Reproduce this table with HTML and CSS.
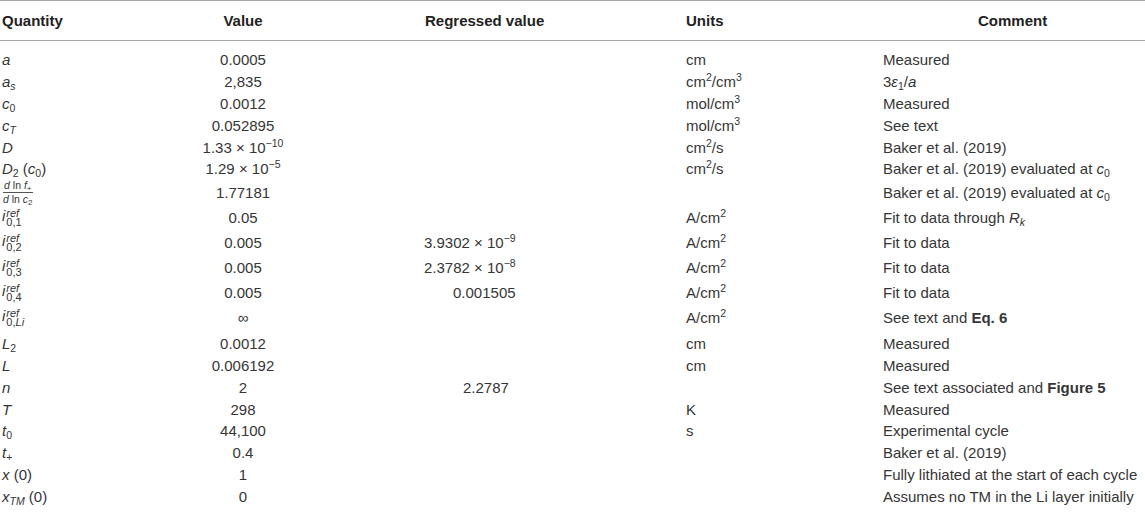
FILE: index.html
```html
<!DOCTYPE html>
<html>
<head>
<meta charset="utf-8">
<link rel="stylesheet" href="styles.css">
</head>
<body>
<table class="tbl">
  <colgroup>
    <col class="c1"><col class="c2"><col class="c3"><col class="c4"><col class="c5">
  </colgroup>
  <thead>
    <tr>
      <th class="h-q">Quantity</th>
      <th class="h-v">Value</th>
      <th class="h-r">Regressed value</th>
      <th class="h-u">Units</th>
      <th class="h-c">Comment</th>
    </tr>
  </thead>
  <tbody>
    <tr class="first">
      <td class="q"><i>a</i></td><td class="v">0.0005</td><td></td><td class="u">cm</td><td class="c">Measured</td>
    </tr>
    <tr>
      <td class="q"><i>a</i><sub><i>s</i></sub></td><td class="v">2,835</td><td></td><td class="u">cm<sup>2</sup>/cm<sup>3</sup></td><td class="c">3<i>ε</i><sub>1</sub>/<i>a</i></td>
    </tr>
    <tr>
      <td class="q"><i>c</i><sub>0</sub></td><td class="v">0.0012</td><td></td><td class="u">mol/cm<sup>3</sup></td><td class="c">Measured</td>
    </tr>
    <tr>
      <td class="q"><i>c</i><sub><i>T</i></sub></td><td class="v">0.052895</td><td></td><td class="u">mol/cm<sup>3</sup></td><td class="c">See text</td>
    </tr>
    <tr>
      <td class="q"><i>D</i></td><td class="v">1.33 × 10<sup>−10</sup></td><td></td><td class="u">cm<sup>2</sup>/s</td><td class="c">Baker et al. (2019)</td>
    </tr>
    <tr>
      <td class="q"><i>D</i><sub>2</sub> (<i>c</i><sub>0</sub>)</td><td class="v">1.29 × 10<sup>−5</sup></td><td></td><td class="u">cm<sup>2</sup>/s</td><td class="c">Baker et al. (2019) evaluated at <i>c</i><sub>0</sub></td>
    </tr>
    <tr class="frac-row">
      <td class="q"><span class="frac"><span class="num"><i>d</i> ln <i>f</i><sub>+</sub></span><span class="den"><i>d</i> ln <i>c</i><sub>2</sub></span></span></td><td class="v">1.77181</td><td></td><td class="u"></td><td class="c">Baker et al. (2019) evaluated at <i>c</i><sub>0</sub></td>
    </tr>
    <tr class="tall">
      <td class="q"><i class="ivar">i</i><span class="ss"><span class="sup"><i>ref</i></span><span class="sb">0,1</span></span></td><td class="v">0.05</td><td></td><td class="u">A/cm<sup>2</sup></td><td class="c">Fit to data through <i>R</i><sub><i>k</i></sub></td>
    </tr>
    <tr class="tall">
      <td class="q"><i class="ivar">i</i><span class="ss"><span class="sup"><i>ref</i></span><span class="sb">0,2</span></span></td><td class="v">0.005</td><td class="r rv1">3.9302 × 10<sup>−9</sup></td><td class="u">A/cm<sup>2</sup></td><td class="c">Fit to data</td>
    </tr>
    <tr class="tall">
      <td class="q"><i class="ivar">i</i><span class="ss"><span class="sup"><i>ref</i></span><span class="sb">0,3</span></span></td><td class="v">0.005</td><td class="r rv1">2.3782 × 10<sup>−8</sup></td><td class="u">A/cm<sup>2</sup></td><td class="c">Fit to data</td>
    </tr>
    <tr class="tall">
      <td class="q"><i class="ivar">i</i><span class="ss"><span class="sup"><i>ref</i></span><span class="sb">0,4</span></span></td><td class="v">0.005</td><td class="r rv2">0.001505</td><td class="u">A/cm<sup>2</sup></td><td class="c">Fit to data</td>
    </tr>
    <tr class="tall">
      <td class="q"><i class="ivar">i</i><span class="ss"><span class="sup"><i>ref</i></span><span class="sb">0,<i>Li</i></span></span></td><td class="v">∞</td><td></td><td class="u">A/cm<sup>2</sup></td><td class="c">See text and <b>Eq. 6</b></td>
    </tr>
    <tr class="after-tall">
      <td class="q"><i>L</i><sub>2</sub></td><td class="v">0.0012</td><td></td><td class="u">cm</td><td class="c">Measured</td>
    </tr>
    <tr>
      <td class="q"><i>L</i></td><td class="v">0.006192</td><td></td><td class="u">cm</td><td class="c">Measured</td>
    </tr>
    <tr>
      <td class="q"><i>n</i></td><td class="v">2</td><td class="r rv3">2.2787</td><td class="u"></td><td class="c">See text associated and <b>Figure 5</b></td>
    </tr>
    <tr>
      <td class="q"><i>T</i></td><td class="v">298</td><td></td><td class="u">K</td><td class="c">Measured</td>
    </tr>
    <tr>
      <td class="q"><i>t</i><sub>0</sub></td><td class="v">44,100</td><td></td><td class="u">s</td><td class="c">Experimental cycle</td>
    </tr>
    <tr>
      <td class="q"><i>t</i><sub>+</sub></td><td class="v">0.4</td><td></td><td class="u"></td><td class="c">Baker et al. (2019)</td>
    </tr>
    <tr>
      <td class="q"><i>x</i> (0)</td><td class="v">1</td><td></td><td class="u"></td><td class="c">Fully lithiated at the start of each cycle</td>
    </tr>
    <tr class="last">
      <td class="q"><i>x</i><sub><i>TM</i></sub> (0)</td><td class="v">0</td><td></td><td class="u"></td><td class="c">Assumes no TM in the Li layer initially</td>
    </tr>
  </tbody>
</table>
</body>
</html>
```

FILE: styles.css
```css
html, body {
  margin: 0;
  padding: 0;
  background: #fff;
}

.tbl {
  width: 1145px;
  border-collapse: collapse;
  table-layout: fixed;
  font-family: "Liberation Sans", Arial, sans-serif;
  font-size: 15px;
  color: #363636;
  border-top: 1px solid #a8a8a8;
  border-bottom: 1px solid #a8a8a8;
}

.c1 { width: 150px; }
.c2 { width: 186px; }
.c3 { width: 300px; }
.c4 { width: 247px; }
.c5 { width: 262px; }

thead th {
  height: 39px;
  padding: 0;
  font-weight: bold;
  color: #222;
  border-bottom: 1px solid #a8a8a8;
  text-align: left;
  vertical-align: middle;
  white-space: nowrap;
}

.h-q { padding-left: 2px; }
.h-v { text-align: center; }
.h-r { padding-left: 89px; }
.h-u { padding-left: 50px; }
.h-c { padding-left: 95px; }

tbody td {
  height: 21.8px;
  padding: 0;
  line-height: 17px;
  vertical-align: middle;
  white-space: nowrap;
}

tbody tr.first td { padding-top: 8px; }
tbody tr.last td { padding-bottom: 9px; }
tbody tr.tall td { height: 25px; }
tbody tr.frac-row td { height: 23.2px; }
tbody tr.after-tall td { padding-top: 3px; }

.q { padding-left: 2px; }
.v { text-align: center; }
.r { text-align: left; }
.rv1 { padding-left: 88px; }
.rv2 { padding-left: 117px; }
.rv3 { padding-left: 127px; }
.u { padding-left: 50px; }

sub, sup {
  font-size: 10.5px;
  line-height: 0;
  vertical-align: baseline;
  position: relative;
}
sub { top: 3px; }
sup { top: -6px; }

.frac {
  display: inline-flex;
  flex-direction: column;
  align-items: center;
  font-size: 10.5px;
  line-height: 11px;
  vertical-align: middle;
}
.frac .num {
  border-bottom: 1px solid #555;
  padding: 0 1px 1px;
}
.frac .den {
  padding: 1px 1px 0;
}
.frac sub {
  font-size: 8px;
  top: 2px;
}

.ivar {
  font-size: 15px;
}
.ss {
  display: inline-flex;
  flex-direction: column;
  vertical-align: middle;
  font-size: 11px;
  line-height: 10px;
  margin-left: 1px;
}
.ss .sup { position: relative; top: 1px; }
.ss .sb { position: relative; top: 0; }
```
